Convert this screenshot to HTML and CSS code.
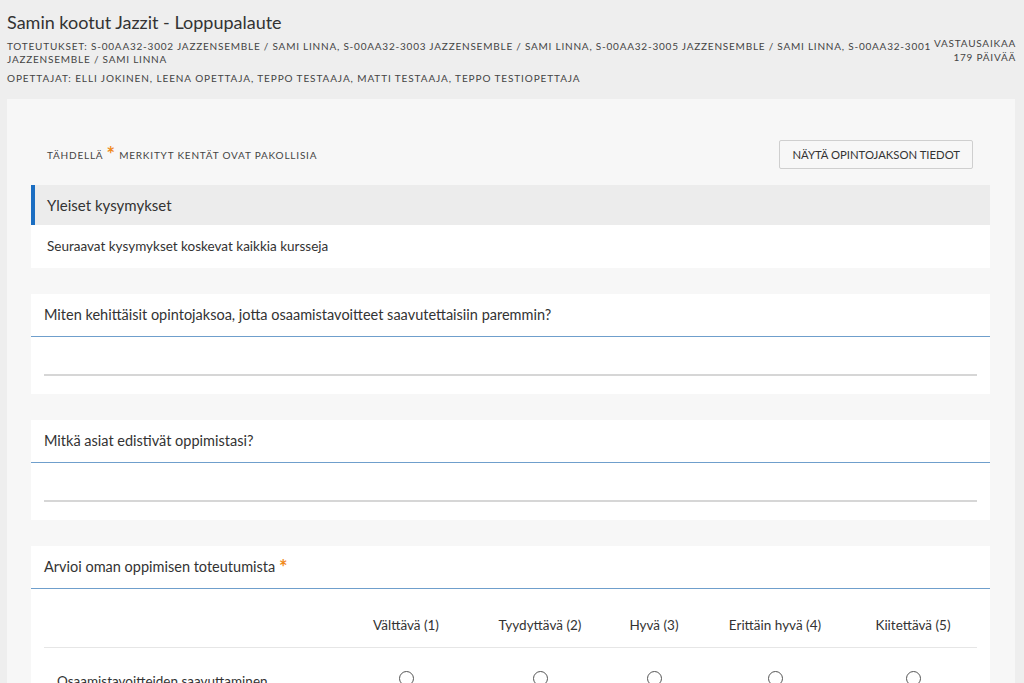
FILE: index.html
```html
<!DOCTYPE html>
<html lang="fi">
<head>
    <meta charset="UTF-8">
    <meta name="viewport" content="width=device-width, initial-scale=1.0">
    <title>Samin kootut Jazzit - Loppupalaute</title>
    <link rel="stylesheet" href="styles.css">
</head>
<body>
    <div class="page-header">
        <div class="header-info">
            <h1>Samin kootut Jazzit - Loppupalaute</h1>
            <p class="meta">Toteutukset: S-00AA32-3002 Jazzensemble / Sami Linna, S-00AA32-3003 Jazzensemble / Sami Linna, S-00AA32-3005 Jazzensemble / Sami Linna, S-00AA32-3001 Jazzensemble / Sami Linna</p>
            <p class="meta teachers">Opettajat: Elli Jokinen, Leena Opettaja, Teppo Testaaja, Matti Testaaja, Teppo Testiopettaja</p>
        </div>
        <div class="answer-time">Vastausaikaa<br>179 päivää</div>
    </div>

    <div class="form-card">
        <div class="form-top">
            <span class="required-note">Tähdellä <span class="star">*</span> merkityt kentät ovat pakollisia</span>
            <button class="info-button">Näytä opintojakson tiedot</button>
        </div>

        <div class="section-title">Yleiset kysymykset</div>
        <div class="section-desc">Seuraavat kysymykset koskevat kaikkia kursseja</div>

        <div class="question">
            <div class="question-title">Miten kehittäisit opintojaksoa, jotta osaamistavoitteet saavutettaisiin paremmin?</div>
            <div class="question-body">
                <div class="text-line"></div>
            </div>
        </div>

        <div class="question">
            <div class="question-title">Mitkä asiat edistivät oppimistasi?</div>
            <div class="question-body">
                <div class="text-line"></div>
            </div>
        </div>

        <div class="question">
            <div class="question-title">Arvioi oman oppimisen toteutumista <span class="star">*</span></div>
            <div class="scale">
                <div class="scale-row scale-head">
                    <div></div>
                    <div>Välttävä (1)</div>
                    <div>Tyydyttävä (2)</div>
                    <div>Hyvä (3)</div>
                    <div>Erittäin hyvä (4)</div>
                    <div>Kiitettävä (5)</div>
                </div>
                <div class="scale-row scale-item">
                    <div class="row-label">Osaamistavoitteiden saavuttaminen</div>
                    <div><span class="radio"></span></div>
                    <div><span class="radio"></span></div>
                    <div><span class="radio"></span></div>
                    <div><span class="radio"></span></div>
                    <div><span class="radio"></span></div>
                </div>
            </div>
        </div>
    </div>
</body>
</html>
```

FILE: styles.css
```css
body {
    margin: 0;
    padding: 0 9px 0 7px;
    font-family: Lato, "Open Sans", sans-serif;
    background-color: #eeeeee;
    color: #333;
    height: 683px;
    overflow: hidden;
}

.page-header {
    display: flex;
    justify-content: space-between;
    align-items: flex-start;
    padding-top: 11px;
    height: 88px;
    box-sizing: border-box;
}

.header-info h1 {
    margin: 0 0 7px 0;
    font-size: 18px;
    font-weight: normal;
    color: #333;
    line-height: 22px;
}

.meta {
    margin: 0;
    font-size: 10px;
    line-height: 13px;
    text-transform: uppercase;
    letter-spacing: 0.78px;
    color: #444;
}

.meta.teachers {
    margin-top: 6px;
    letter-spacing: 0.9px;
}

.answer-time {
    flex-shrink: 0;
    margin-top: 25px;
    margin-right: -1px;
    text-align: right;
    font-size: 10px;
    line-height: 14px;
    text-transform: uppercase;
    letter-spacing: 0.78px;
    color: #444;
}

.form-card {
    margin-top: 11px;
    background-color: #f7f7f7;
    padding: 41px 25px 20px 24px;
}

.form-top {
    display: flex;
    justify-content: space-between;
    align-items: center;
    padding: 0 17px 0 16px;
    margin-bottom: 16px;
}

.required-note {
    font-size: 10px;
    text-transform: uppercase;
    letter-spacing: 0.8px;
    color: #444;
}

.star {
    color: #f08a1c;
    font-size: 20px;
    font-weight: bold;
    line-height: 10px;
    vertical-align: -3px;
}

.info-button {
    height: 29px;
    padding: 0 12px;
    background-color: #f7f7f7;
    border: 1px solid #cfcfcf;
    border-radius: 2px;
    font-family: inherit;
    font-size: 11.3px;
    color: #333;
    text-transform: uppercase;
}

.section-title {
    height: 40px;
    line-height: 40px;
    padding-left: 12px;
    border-left: 4px solid #1b6ec2;
    background-color: #ececec;
    font-size: 15px;
    color: #333;
}

.section-desc {
    height: 43px;
    line-height: 43px;
    padding-left: 16px;
    background-color: #fff;
    font-size: 13.5px;
    color: #333;
}

.question {
    margin-top: 26px;
    background-color: #fff;
}

.question-title {
    height: 42px;
    line-height: 42px;
    padding-left: 13px;
    border-bottom: 1px solid #6f9fcc;
    font-size: 14.5px;
    color: #333;
}

.question-body {
    height: 57px;
    padding: 0 13px;
}

.text-line {
    padding-top: 37px;
    border-bottom: 2px solid #d6d6d6;
}

.scale {
    padding: 0 13px;
}

.scale-row {
    display: grid;
    grid-template-columns: 295px 134px 134px 94px 148px 128px;
    align-items: center;
    text-align: center;
    font-size: 13.5px;
    color: #333;
}

.scale-head {
    height: 59px;
    padding-top: 14px;
    box-sizing: border-box;
    border-bottom: 1px solid #e6e6e6;
}

.scale-item {
    align-items: start;
    padding-top: 23px;
}

.scale-row .row-label {
    text-align: left;
    padding-left: 13px;
    line-height: 16px;
    padding-top: 2px;
}

.radio {
    display: inline-block;
    width: 15px;
    height: 15px;
    border: 1px solid #555;
    border-radius: 50%;
    box-sizing: border-box;
}
```
